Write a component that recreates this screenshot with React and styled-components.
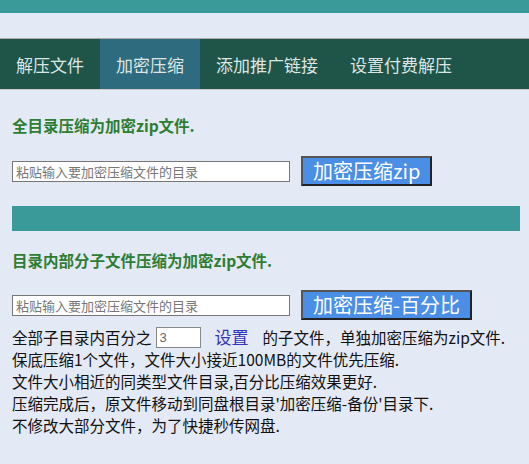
import React from "react";
import styled, { createGlobalStyle } from "styled-components";

const G = createGlobalStyle`
  body { margin: 0; background: #e3e9f5; font-family: "Noto Sans CJK SC", sans-serif; }
`;
const TopBar = styled.div`height: 13px; background: #3a9a9a;`;
const Nav = styled.nav`display: flex; margin-top: 25px; height: 52px; background: #1f5449; border-top: 1px solid #aaa; border-bottom: 1px solid #ccc; box-sizing: border-box;`;
const Tab = styled.div`
  padding: 0 16px; display: flex; align-items: center; font-size: 17px; color: #dde6e2;
  background: ${p => (p.$active ? "#2e6b7e" : "transparent")};
`;
const Content = styled.div`padding: 0 9px 0 12px;`;
const Heading = styled.div`color: #2e7d32; font-weight: bold; font-size: 15.5px; margin-top: ${p => p.$mt}px; line-height: 20px;`;
const Row = styled.div`display: flex; align-items: center; gap: 11px; margin-top: ${p => p.$mt}px;`;
const Input = styled.input`
  width: 278px; height: 21px; box-sizing: border-box; border: 1px solid #767676; font-size: 13px;
  font-family: "Noto Sans CJK SC", sans-serif; padding: 0 3px; background: #fff;
  &::placeholder { color: #777; }
`;
const Button = styled.button`
  height: 30px; padding: 0 10px; background: #4a8ee6; color: #fff; font-size: 20px;
  border: 2px solid; border-color: #555 #222 #222 #555; font-family: "Noto Sans CJK SC", sans-serif; line-height: 1;
`;
const Divider = styled.div`height: 25px; background: #3a9a9a; margin-top: 20px;`;
const Line = styled.div`font-size: 15.5px; color: #111; line-height: 22px; display: flex; align-items: center; white-space: nowrap;`;
const Small = styled.input`width: 45px; height: 21px; box-sizing: border-box; margin: 0 14px 0 4px; border: 1px solid #888; font-size: 13px; color: #666; padding: 0 3px;`;
const Link = styled.span`color: #3333bb; font-size: 17px; margin-right: 14px;`;

export default function App() {
  return (
    <>
      <G />
      <TopBar />
      <Nav>
        <Tab>解压文件</Tab>
        <Tab $active>加密压缩</Tab>
        <Tab>添加推广链接</Tab>
        <Tab>设置付费解压</Tab>
      </Nav>
      <Content>
        <Heading $mt={25}>全目录压缩为加密zip文件.</Heading>
        <Row $mt={21}>
          <Input placeholder="粘贴输入要加密压缩文件的目录" />
          <Button>加密压缩zip</Button>
        </Row>
        <Divider />
        <Heading $mt={19}>目录内部分子文件压缩为加密zip文件.</Heading>
        <Row $mt={20}>
          <Input placeholder="粘贴输入要加密压缩文件的目录" />
          <Button>加密压缩-百分比</Button>
        </Row>
        <Line style={{ marginTop: 6 }}>全部子目录内百分之<Small defaultValue="3" /><Link>设置</Link>的子文件，单独加密压缩为zip文件.</Line>
        <Line>保底压缩1个文件，文件大小接近100MB的文件优先压缩.</Line>
        <Line>文件大小相近的同类型文件目录,百分比压缩效果更好.</Line>
        <Line>压缩完成后，原文件移动到同盘根目录'加密压缩-备份'目录下.</Line>
        <Line>不修改大部分文件，为了快捷秒传网盘.</Line>
      </Content>
    </>
  );
}
